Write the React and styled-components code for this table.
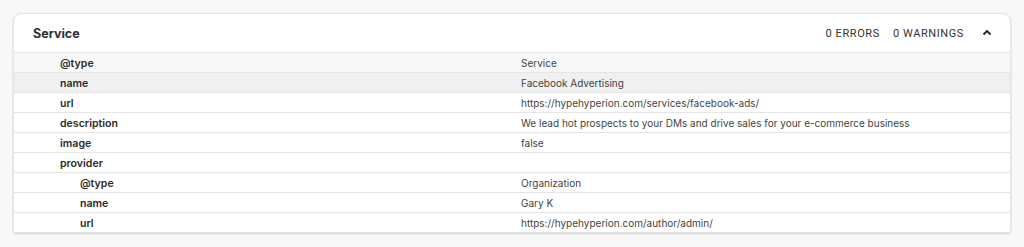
import { createGlobalStyle } from 'styled-components';
import styled from 'styled-components';

const GlobalStyle = createGlobalStyle`
  body {
    margin: 0;
    background: #f8f8f8;
    font-family: Inter, "Noto Sans", Arial, sans-serif;
  }
`;

const Page = styled.div`
  padding: 13px 13px 14px 13px;
`;

const Card = styled.section`
  background: #fff;
  border: 1px solid #e4e4e4;
  border-radius: 8px 8px 3px 3px;
  box-shadow: 0 1px 2px rgba(0, 0, 0, 0.18);
  overflow: hidden;
`;

const Header = styled.div`
  display: flex;
  align-items: center;
  justify-content: space-between;
  height: 38px;
  padding: 0 15px 0 19px;
  border-bottom: 1px solid #e4e4e4;
`;

const Title = styled.h2`
  margin: 0;
  font-size: 12.5px;
  font-weight: 700;
  color: #2f2f2f;
`;

const Status = styled.div`
  display: flex;
  align-items: center;
  gap: 13px;
  font-family: Roboto, "Liberation Sans", sans-serif;
  font-size: 11px;
  letter-spacing: 0.6px;
  color: #333;
`;

const Toggle = styled.button`
  display: flex;
  align-items: center;
  justify-content: center;
  margin-left: 2px;
  padding: 0;
  width: 16px;
  height: 16px;
  border: none;
  background: none;
  color: #222;
`;

const Row = styled.div`
  display: grid;
  grid-template-columns: 507px 1fr;
  height: 19px;
  line-height: 20px;
  background: ${(p) => p.$bg || '#fff'};
  & + & {
    border-top: 1px solid #e6e6e6;
  }
`;

const Key = styled.div`
  padding-left: ${(p) => 46 + p.$depth * 20}px;
  padding-top: 1px;
  font-size: 10.6px;
  font-weight: 600;
  color: #2b2b2b;
`;

const Value = styled.div`
  font-size: 10px;
  color: #444;
`;

const rows = [
  { k: '@type', v: 'Service', d: 0, bg: '#f8f8f8' },
  { k: 'name', v: 'Facebook Advertising', d: 0, bg: '#f0f0f0' },
  { k: 'url', v: 'https://hypehyperion.com/services/facebook-ads/', d: 0 },
  { k: 'description', v: 'We lead hot prospects to your DMs and drive sales for your e-commerce business', d: 0 },
  { k: 'image', v: 'false', d: 0 },
  { k: 'provider', v: '', d: 0 },
  { k: '@type', v: 'Organization', d: 1 },
  { k: 'name', v: 'Gary K', d: 1 },
  { k: 'url', v: 'https://hypehyperion.com/author/admin/', d: 1 },
];

const App = () => {
  return (
    <Page>
      <GlobalStyle />
      <Card>
        <Header>
          <Title>Service</Title>
          <Status>
            <span>0 ERRORS</span>
            <span>0 WARNINGS</span>
            <Toggle aria-label="collapse">
              <svg width="12" height="12" viewBox="0 0 12 12">
                <path d="M2.5 7.5 L6 4 L9.5 7.5" fill="none" stroke="currentColor" strokeWidth="1.8" />
              </svg>
            </Toggle>
          </Status>
        </Header>
        {rows.map((r, i) => (
          <Row key={i} $bg={r.bg}>
            <Key $depth={r.d}>{r.k}</Key>
            <Value>{r.v}</Value>
          </Row>
        ))}
      </Card>
    </Page>
  );
};

export default App;
